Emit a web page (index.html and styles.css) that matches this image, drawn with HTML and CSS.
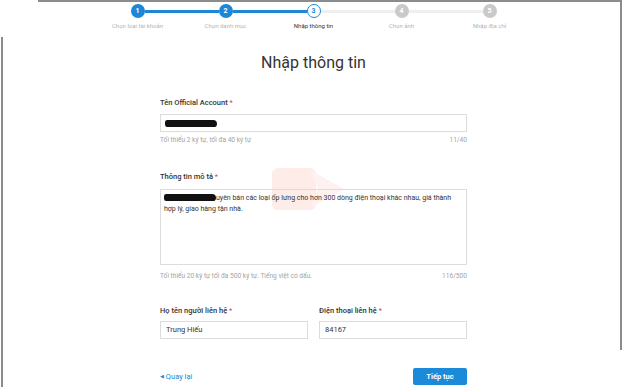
FILE: index.html
```html
<!DOCTYPE html>
<html lang="vi">
<head>
    <meta charset="UTF-8">
    <title>Nhập thông tin</title>
    <link rel="stylesheet" href="styles.css">
</head>
<body>
    <div class="stepper">
        <div class="track">
            <span class="dot done">1</span><span class="bar done"></span>
            <span class="dot done">2</span><span class="bar done"></span>
            <span class="dot current">3</span><span class="bar"></span>
            <span class="dot">4</span><span class="bar"></span>
            <span class="dot">5</span>
        </div>
        <div class="names">
            <span>Chọn loại tài khoản</span>
            <span>Chọn danh mục</span>
            <span class="current">Nhập thông tin</span>
            <span>Chọn ảnh</span>
            <span>Nhập địa chỉ</span>
        </div>
    </div>

    <div class="container">
        <h1>Nhập thông tin</h1>

        <div class="form-group first">
            <label>Tên Official Account <b>*</b></label>
            <div class="field"><span class="redact"></span></div>
            <div class="hint"><span>Tối thiểu 2 ký tự, tối đa 40 ký tự</span><span>11/40</span></div>
        </div>

        <div class="form-group desc">
            <svg class="mark" width="76" height="50" viewBox="0 0 76 50">
                <rect x="2" y="4" width="44" height="42" rx="6" fill="#fdece7"/>
                <polygon points="40,6 74,25 40,44 48,25" fill="#fdf2ef"/>
            </svg>
            <label>Thông tin mô tả <b>*</b></label>
            <div class="field area"><span class="redact"></span>uyên bán các loại ốp lưng cho hơn 300 dòng điện thoại khác nhau, giá thành hợp lý, giao hàng tận nhà.</div>
            <div class="hint"><span>Tối thiểu 20 ký tự tối đa 500 ký tự. Tiếng việt có dấu.</span><span>116/500</span></div>
        </div>

        <div class="form-row">
            <div class="form-group">
                <label>Họ tên người liên hệ <b>*</b></label>
                <div class="field">Trung Hiếu</div>
            </div>
            <div class="form-group">
                <label>Điện thoại liên hệ <b>*</b></label>
                <div class="field">84167</div>
            </div>
        </div>

        <div class="actions">
            <a class="back" href="#"><i>&#9664;</i> Quay lại</a>
            <button>Tiếp tục</button>
        </div>
    </div>
</body>
</html>
```

FILE: styles.css
```css
body {
    margin: 0;
    background-color: white;
    font-family: Roboto, "Noto Sans", Arial, sans-serif;
    color: #333;
}
/* screenshot frame edges */
body::before {
    content: "";
    position: absolute;
    left: 38px;
    top: 0;
    width: 582px;
    height: 348px;
    border-top: 2px solid #8c8c8c;
    border-right: 2px solid #8c8c8c;
}
body::after {
    content: "";
    position: absolute;
    left: 1px;
    top: 37px;
    width: 2px;
    height: 350px;
    background-color: #8c8c8c;
}
.stepper {
    padding-top: 4px;
}
.track {
    display: flex;
    justify-content: center;
    align-items: center;
}
.dot {
    width: 14px;
    height: 14px;
    border-radius: 50%;
    background-color: #c9c9c9;
    color: white;
    font-size: 7px;
    font-weight: bold;
    display: flex;
    align-items: center;
    justify-content: center;
    box-sizing: border-box;
}
.dot.done {
    background-color: #1b87d6;
}
.dot.current {
    background-color: white;
    border: 1.5px solid #1b87d6;
    color: #1b87d6;
}
.bar {
    width: 74px;
    height: 3px;
    background-color: #efefef;
}
.bar.done {
    background-color: #1b87d6;
}
.names {
    display: grid;
    grid-template-columns: repeat(5, 88px);
    justify-content: center;
    margin-top: 4px;
    font-size: 6px;
    line-height: 8px;
    color: #b5b5b5;
    text-align: center;
}
.names .current {
    color: #333;
}
.container {
    width: 307px;
    margin: 0 auto;
}
h1 {
    margin: 22px 0 0;
    font-size: 16px;
    line-height: 22px;
    font-weight: normal;
    text-align: center;
    color: #333;
}
.form-group {
    position: relative;
}
.form-group.first {
    margin-top: 24px;
}
.form-group.desc {
    margin-top: 28px;
}
label {
    display: block;
    font-size: 7.5px;
    line-height: 10px;
    font-weight: 500;
    color: #333;
}
label b {
    color: #e0403a;
    font-weight: normal;
}
.field {
    margin-top: 6px;
    height: 18px;
    border: 1px solid #dcdcdc;
    box-sizing: border-box;
    padding: 0 4px;
    font-size: 7.5px;
    line-height: 16px;
    color: #333;
    display: flex;
    align-items: center;
}
.field.area {
    display: block;
    margin-top: 7px;
    height: 76px;
    padding: 3px 3px;
    font-size: 7px;
    line-height: 11px;
}
.redact {
    display: inline-block;
    width: 52px;
    height: 7px;
    border-radius: 3px 5px 4px 3px;
    background-color: #111;
    vertical-align: -1px;
}
.hint {
    display: flex;
    justify-content: space-between;
    margin-top: 4px;
    font-size: 6.6px;
    line-height: 8px;
    color: #a3a3a3;
}
.desc .hint {
    margin-top: 7px;
}
.mark {
    position: absolute;
    left: 110px;
    top: -8px;
    z-index: -1;
}
.form-row {
    display: flex;
    gap: 11px;
    margin-top: 26px;
}
.form-row .form-group {
    flex: 1;
}
.form-row .field {
    margin-top: 5px;
    padding: 0 5px;
}
.actions {
    display: flex;
    justify-content: space-between;
    align-items: center;
    margin-top: 29px;
}
.back {
    font-size: 7.5px;
    color: #1b87d6;
    text-decoration: none;
}
.back i {
    font-style: normal;
    font-size: 5px;
    vertical-align: 1px;
}
button {
    width: 54px;
    height: 17px;
    padding: 0;
    border: none;
    border-radius: 2px;
    background-color: #1b8ad8;
    color: white;
    font-family: Roboto, "Noto Sans", Arial, sans-serif;
    font-size: 7.5px;
    font-weight: bold;
    cursor: pointer;
}
```
